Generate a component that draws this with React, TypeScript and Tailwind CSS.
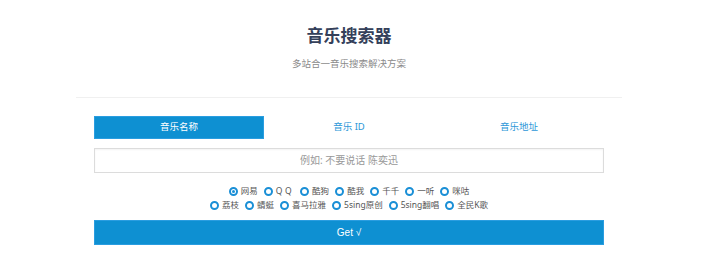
import React from "react";

const FONT = { fontFamily: '"Noto Sans", "Noto Sans CJK SC", sans-serif' };

function Radio({ label, checked, tracking }: { label: string; checked?: boolean; tracking?: boolean }) {
  return (
    <label className="flex items-center">
      <span className="flex h-[9px] w-[9px] items-center justify-center rounded-full border-[2px] border-[#1a8fd6] bg-white">
        {checked && <span className="h-[3px] w-[3px] rounded-full bg-[#1a8fd6]" />}
      </span>
      <span className={"ml-[3px] text-[8.5px] leading-[14px] text-[#555] " + (tracking ? "tracking-[2.5px]" : "")}>{label}</span>
    </label>
  );
}

export default function App() {
  const row1 = ["网易", "QQ", "酷狗", "酷我", "千千", "一听", "咪咕"];
  const row2 = ["荔枝", "蜻蜓", "喜马拉雅", "5sing原创", "5sing翻唱", "全民K歌"];
  return (
    <div className="min-h-[264px] w-full bg-white" style={FONT}>
      <div className="flex w-[698px] flex-col items-center pt-[24px]">
        <h1 className="text-[17px] font-bold leading-[24px] text-[#34405a]">音乐搜索器</h1>
        <p className="mt-[9px] text-[9.5px] leading-[14px] text-[#8a8a8a]">多站合一音乐搜索解决方案</p>
        <div className="mt-[26px] w-[546px] border-t border-[#f0f0f0] px-[18px] pt-[18px]">
          <div className="grid h-[23px] grid-cols-3 text-[9.5px]">
            <div className="flex items-center justify-center border border-[#2a9de0] bg-[#0e90d2] text-white">音乐名称</div>
            <div className="flex items-center justify-center text-[#2d97d8]">音乐 ID</div>
            <div className="flex items-center justify-center text-[#2d97d8]">音乐地址</div>
          </div>
          <div className="mt-[9px] flex h-[25px] items-center justify-center border border-[#dcdcdc] text-[10px] text-[#999] shadow-[inset_0_1px_2px_rgba(0,0,0,0.05)]">
            例如: 不要说话 陈奕迅
          </div>
          <div className="mt-[11px] flex flex-col items-center">
            <div className="flex h-[14px] items-center gap-[6px]">
              {row1.map((l, i) => (
                <Radio key={l} label={l} checked={i === 0} tracking={l === "QQ"} />
              ))}
            </div>
            <div className="flex h-[14px] items-center gap-[6px]">
              {row2.map((l) => (
                <Radio key={l} label={l} />
              ))}
            </div>
          </div>
          <div
            className="mt-[8px] flex h-[25px] items-center justify-center border border-[#2a9de0] bg-[#0e90d2] text-[10px] text-white"
            style={{ fontFamily: '"Liberation Sans", "Noto Sans CJK SC", sans-serif' }}
          >
            Get √
          </div>
        </div>
      </div>
    </div>
  );
}
